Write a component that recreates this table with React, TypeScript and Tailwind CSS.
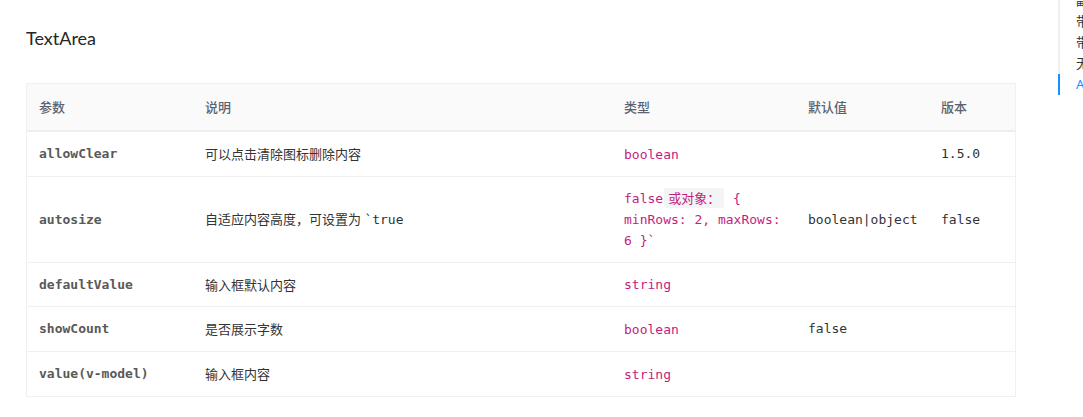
import React from "react";

const mono = "font-['DejaVu_Sans_Mono','Liberation_Mono',monospace]";
const cjk = "font-['Noto_Sans','Noto_Sans_CJK_SC',sans-serif]";

type Row = {
  name: string;
  desc: React.ReactNode;
  type: React.ReactNode;
  def: string;
  ver: string;
  h: string;
};

const code = "text-[#c41d7f]";

const rows: Row[] = [
  {
    name: "allowClear",
    desc: "可以点击清除图标删除内容",
    type: <span className={`${mono} ${code}`}>boolean</span>,
    def: "",
    ver: "1.5.0",
    h: "h-[45px]",
  },
  {
    name: "autosize",
    desc: (
      <span>
        自适应内容高度，可设置为 <span className={mono}>`true</span>
      </span>
    ),
    type: (
      <span className={`${mono} ${code} leading-[20px]`}>
        false
        <span className={`${cjk} mx-[1px] rounded-[3px] bg-[#f2f4f5] px-[4px] py-[1px] text-[13px] text-[#c41d7f]`}>
          或对象：
        </span>{" "}
        {"{ minRows: 2, maxRows: 6 }`"}
      </span>
    ),
    def: "boolean|object",
    ver: "false",
    h: "h-[86px]",
  },
  {
    name: "defaultValue",
    desc: "输入框默认内容",
    type: <span className={`${mono} ${code}`}>string</span>,
    def: "",
    ver: "",
    h: "h-[44px]",
  },
  {
    name: "showCount",
    desc: "是否展示字数",
    type: <span className={`${mono} ${code}`}>boolean</span>,
    def: "false",
    ver: "",
    h: "h-[45px]",
  },
  {
    name: "value(v-model)",
    desc: "输入框内容",
    type: <span className={`${mono} ${code}`}>string</span>,
    def: "",
    ver: "",
    h: "h-[44px]",
  },
];

const grid = "grid grid-cols-[166px_419px_184px_133px_88px]";

export default function App() {
  return (
    <div className={`flex h-[417px] w-[1083px] overflow-hidden bg-white ${cjk}`}>
      <div className="w-[990px] shrink-0 ml-[26px]">
        <h2 className="mt-[24px] font-['Lato','Noto_Sans',sans-serif] text-[18px] leading-[28px] text-[#262626]">
          TextArea
        </h2>
        <div className="mt-[31px] border border-[#f0f0f0] text-[13px] leading-[20px]">
          <div className={`${grid} h-[48px] items-center border-b-2 border-[#eeeeee] bg-[#fafafa] font-medium text-[#5c6370]`}>
            <div className="pl-[12px]">参数</div>
            <div className="pl-[12px]">说明</div>
            <div className="pl-[12px]">类型</div>
            <div className="pl-[12px]">默认值</div>
            <div className="pl-[12px]">版本</div>
          </div>
          {rows.map((r, i) => {
            const last = i === rows.length - 1;
            return (
              <div
                key={r.name}
                className={`${grid} ${r.h} items-center ${last ? "" : "border-b"} border-[#f0f0f0] text-[#333]`}
              >
                <div className={`pl-[12px] ${mono} font-bold text-[#595959]`}>{r.name}</div>
                <div className="pl-[12px]">{r.desc}</div>
                <div className="pl-[12px] pr-[6px]">{r.type}</div>
                <div className={`pl-[12px] ${mono} text-[#333]`}>{r.def}</div>
                <div className={`pl-[12px] ${mono} text-[#333]`}>{r.ver}</div>
              </div>
            );
          })}
        </div>
      </div>
      <div className="ml-[42px] shrink-0 border-l-2 border-[#f0f0f0] h-[96px] -mt-[10px] whitespace-nowrap text-[13px] leading-[21px] text-[#333]">
        <div className="pl-[16px]">副标题</div>
        <div className="pl-[16px]">带移除图标</div>
        <div className="pl-[16px]">带字数提示</div>
        <div className="pl-[16px]">无边框</div>
        <div className="-ml-[2px] border-l-2 border-[#1890ff] pl-[16px] text-[#1890ff]">API</div>
      </div>
    </div>
  );
}
